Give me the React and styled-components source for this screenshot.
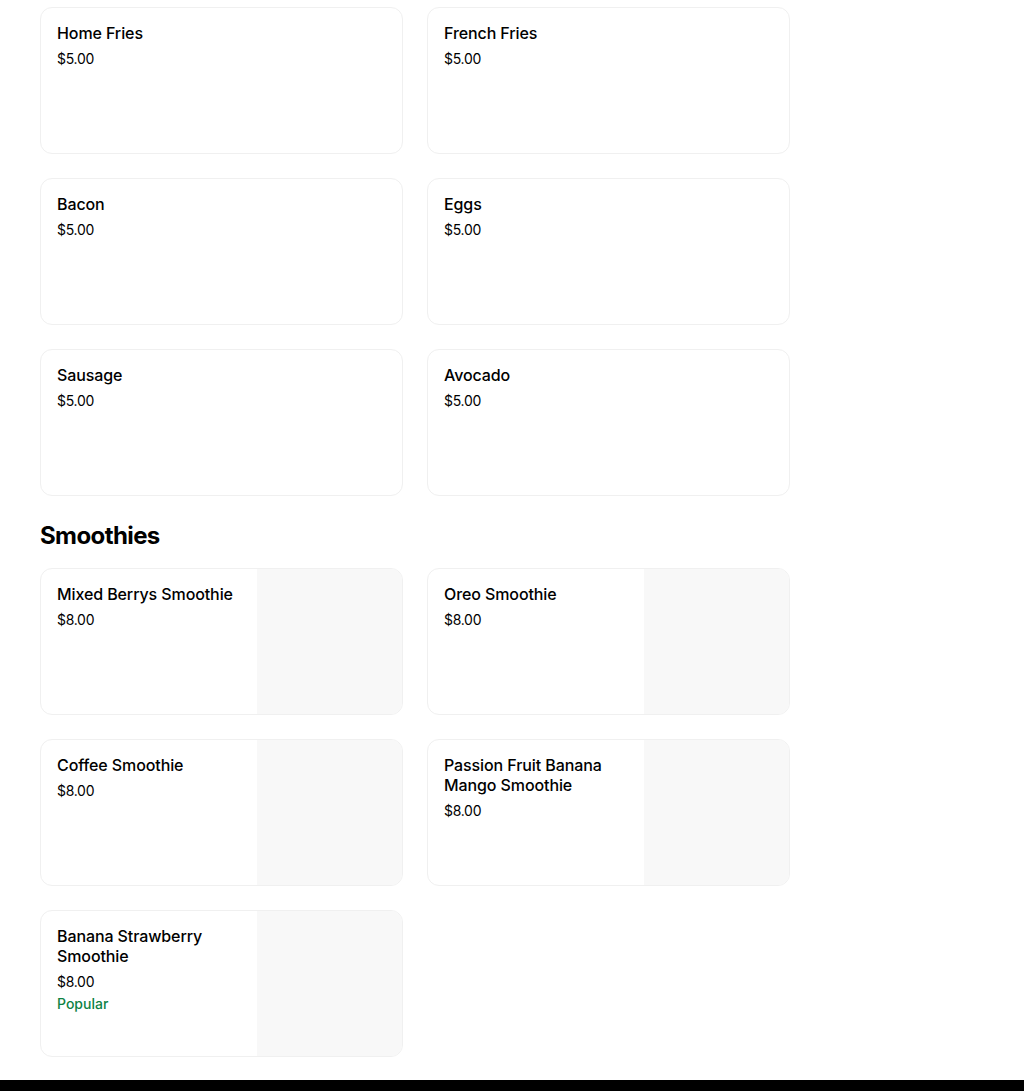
import React from "react";
import styled, { createGlobalStyle } from "styled-components";

const Global = createGlobalStyle`
  html, body { margin: 0; padding: 0; background: #fff; }
  body { font-family: Inter, "Liberation Sans", Arial, sans-serif; color: #000; }
`;

const Page = styled.div`
  padding: 7px 0 0 40px;
  width: 750px;
`;

const Grid = styled.div`
  display: grid;
  grid-template-columns: 363px 363px;
  column-gap: 24px;
  row-gap: 24px;
`;

const Heading = styled.h2`
  margin: 24px 0 16px;
  font-size: 24px;
  line-height: 32px;
  font-weight: 700;
  letter-spacing: -0.6px;
`;

const Card = styled.div`
  box-sizing: border-box;
  height: 147px;
  border: 1px solid #f0f0f0;
  border-radius: 12px;
  overflow: hidden;
  display: flex;
  background: #fff;
`;

const Info = styled.div`
  flex: 1;
  padding: 15px 16px 16px;
  min-width: 0;
`;

const Title = styled.div`
  font-size: 16px;
  line-height: 20px;
  font-weight: 500;
  color: #000;
  letter-spacing: -0.1px;
`;

const Price = styled.div`
  margin-top: 6px;
  font-size: 14px;
  line-height: 20px;
  color: #000;
  letter-spacing: -0.3px;
`;

const Tag = styled.div`
  margin-top: 2px;
  font-size: 14px;
  line-height: 20px;
  font-weight: 500;
  color: #0e8345;
`;

const Thumb = styled.div`
  width: 145px;
  flex: none;
  background: #f8f8f8;
`;

const Footer = styled.div`
  margin-top: 23px;
  margin-left: -40px;
  width: 1024px;
  height: 40px;
  background: #000;
`;

const sides = [
  ["Home Fries", "$5.00"],
  ["French Fries", "$5.00"],
  ["Bacon", "$5.00"],
  ["Eggs", "$5.00"],
  ["Sausage", "$5.00"],
  ["Avocado", "$5.00"],
];

const smoothies = [
  ["Mixed Berrys Smoothie", "$8.00"],
  ["Oreo Smoothie", "$8.00"],
  ["Coffee Smoothie", "$8.00"],
  ["Passion Fruit Banana Mango Smoothie", "$8.00"],
  ["Banana Strawberry Smoothie", "$8.00", "Popular"],
];

function Item({ name, price, tag, image }) {
  return (
    <Card>
      <Info>
        <Title>{name}</Title>
        <Price>{price}</Price>
        {tag && <Tag>{tag}</Tag>}
      </Info>
      {image && <Thumb />}
    </Card>
  );
}

export default function App() {
  return (
    <>
      <Global />
      <Page>
        <Grid>
          {sides.map(([n, p]) => (
            <Item key={n} name={n} price={p} />
          ))}
        </Grid>
        <Heading>Smoothies</Heading>
        <Grid>
          {smoothies.map(([n, p, t]) => (
            <Item key={n} name={n} price={p} tag={t} image />
          ))}
        </Grid>
        <Footer />
      </Page>
    </>
  );
}
